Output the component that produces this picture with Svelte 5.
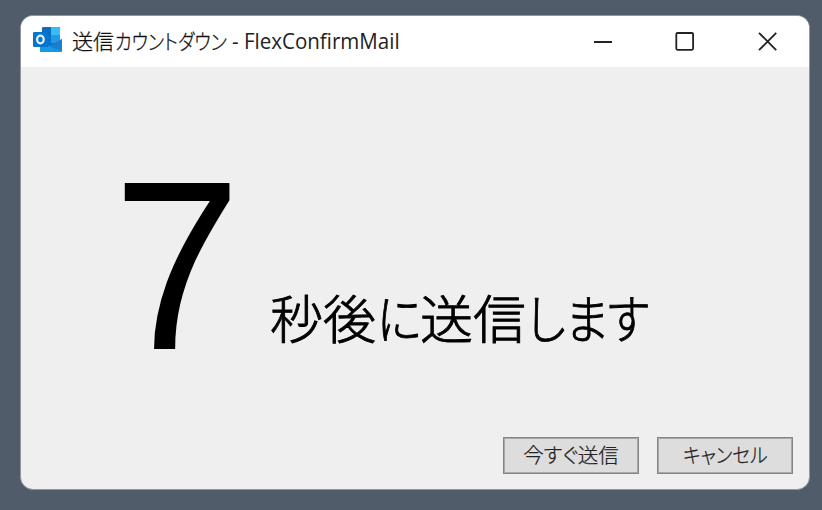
<script>
  let seconds = $state(7);
</script>

<main class="desktop">
  <section class="window">
    <header class="titlebar">
      <svg class="logo" width="30" height="28" viewBox="0 0 30 28" aria-hidden="true">
        <rect x="9" y="1" width="18" height="24" rx="1.2" fill="#0871c9" />
        <path d="M9 2h9v7H9z" fill="#0a6dc0" />
        <path d="M18 1h8a1 1 0 0 1 1 1v7h-9z" fill="#38bdf2" />
        <path d="M9 9h9v8H9z" fill="#0873cf" />
        <path d="M18 9h9v8h-9z" fill="#2299e9" />
        <path d="M7 16l11 4 11-7v12a1 1 0 0 1-1 1H8a1 1 0 0 1-1-1z" fill="#0f7fd2" />
        <path d="M7 17l22 8-1 1H8a1 1 0 0 1-1-1z" fill="#1599e2" />
        <path d="M29 13v12L17 19.5z" fill="#1a80cd" />
        <rect x="0" y="6" width="15" height="15" rx="1.2" fill="#0875cd" />
        <ellipse cx="7.4" cy="13.5" rx="3.3" ry="3.8" fill="none" stroke="#e8f4fd" stroke-width="2.2" />
      </svg>
      <h1><span class="title-kanji">送信</span><span class="title-kana">カウントダウン</span><span class="title-en">- FlexConfirmMail</span></h1>
      <div class="controls">
        <button aria-label="Minimize"><svg width="20" height="20"><path d="M1 10h18" /></svg></button>
        <button aria-label="Maximize"><svg width="20" height="20"><rect x="1.3" y="1" width="16.8" height="16.8" rx="1.2" /></svg></button>
        <button aria-label="Close"><svg width="20" height="20"><path d="M2 .8l17.2 17.4M19.2 .8L2 18.2" /></svg></button>
      </div>
    </header>
    <div class="body">
      <div class="message">
        <span class="number">{seconds}</span>
        <span class="caption"><span class="kanji">秒後</span><span class="ni">に</span><span class="kanji">送信</span><span class="kana">します</span></span>
      </div>
      <footer>
        <button class="action"><span class="send">今すぐ送信</span></button>
        <button class="action"><span class="cancel">キャンセル</span></button>
      </footer>
    </div>
  </section>
</main>

<style>
  :global(body) { margin: 0; overflow: hidden; }
  .desktop {
    box-sizing: border-box;
    width: 822px;
    height: 510px;
    padding: 15px 12px 20px 20px;
    background: #515c6a;
    font-family: "Noto Sans CJK JP", sans-serif;
    color: #000;
  }
  .window {
    box-sizing: border-box;
    height: 475px;
    display: flex;
    flex-direction: column;
    border: 1px solid #92979d;
    border-radius: 13px;
    background: #efefef;
    overflow: hidden;
  }
  .titlebar {
    display: flex;
    height: 51px;
    background: #fff;
    flex: none;
  }
  .logo { margin: 10px 0 0 12px; flex: none; }
  h1 {
    display: flex;
    margin: 0 0 0 9px;
    width: 340px;
    color: #111;
    font-size: 21px;
    font-weight: 300;
    line-height: 49px;
    white-space: nowrap;
    font-feature-settings: "palt";
    -webkit-text-stroke: 0.3px #111;
  }
  h1 span { flex: none; transform-origin: left; }
  .title-kanji { width: 43px; }
  .title-kana { width: 117px; transform: scaleX(0.86); }
  .title-en {
    font-family: "Open Sans", "Noto Sans", sans-serif;
    font-weight: 400;
    font-size: 21.5px;
    color: #222;
    -webkit-text-stroke: 0;
    transform: scaleX(0.955);
  }
  .controls { display: flex; margin-left: auto; padding-right: 1px; }
  .controls button {
    display: grid;
    place-items: center;
    width: 82px;
    height: 51px;
    padding: 0;
    border: 0;
    background: none;
  }
  .controls svg { fill: none; stroke: #222; stroke-width: 1.8; }
  .body { flex: 1; display: flex; flex-direction: column; }
  .message { display: flex; height: 370px; align-items: flex-start; padding-left: 92px; }
  .number {
    width: 157px;
    margin-top: 60px;
    font-family: "Liberation Sans", Arial, sans-serif;
    font-size: 241px;
    line-height: 277px;
    transform: scaleX(0.955);
    transform-origin: left;
  }
  .caption {
    display: flex;
    margin-top: 219px;
    font-size: 52.5px;
    font-weight: 300;
    line-height: 60px;
    white-space: nowrap;
    font-feature-settings: "palt";
    -webkit-text-stroke: 0.9px #000;
  }
  .caption span { flex: none; transform-origin: left; }
  .kanji { width: 107px; transform: scaleX(1.01); }
  .ni { width: 43px; transform: scaleX(0.88); }
  .kana { transform: scaleX(0.87); }
  footer { display: flex; justify-content: flex-end; gap: 18px; padding-right: 16px; }
  .action {
    display: grid;
    place-items: center;
    box-sizing: border-box;
    width: 136px;
    height: 37px;
    padding: 0;
    border: 1px solid #858585;
    box-shadow: inset 0 0 0 1px #a8a8a8;
    background: #dddddd;
    color: #222;
    font: 300 20.5px/33px "Noto Sans CJK JP", sans-serif;
    white-space: nowrap;
    font-feature-settings: "palt";
    -webkit-text-stroke: 0.25px #222;
  }
  .action span { padding-bottom: 2px; }
  .cancel { transform: scaleX(0.91); }
</style>
